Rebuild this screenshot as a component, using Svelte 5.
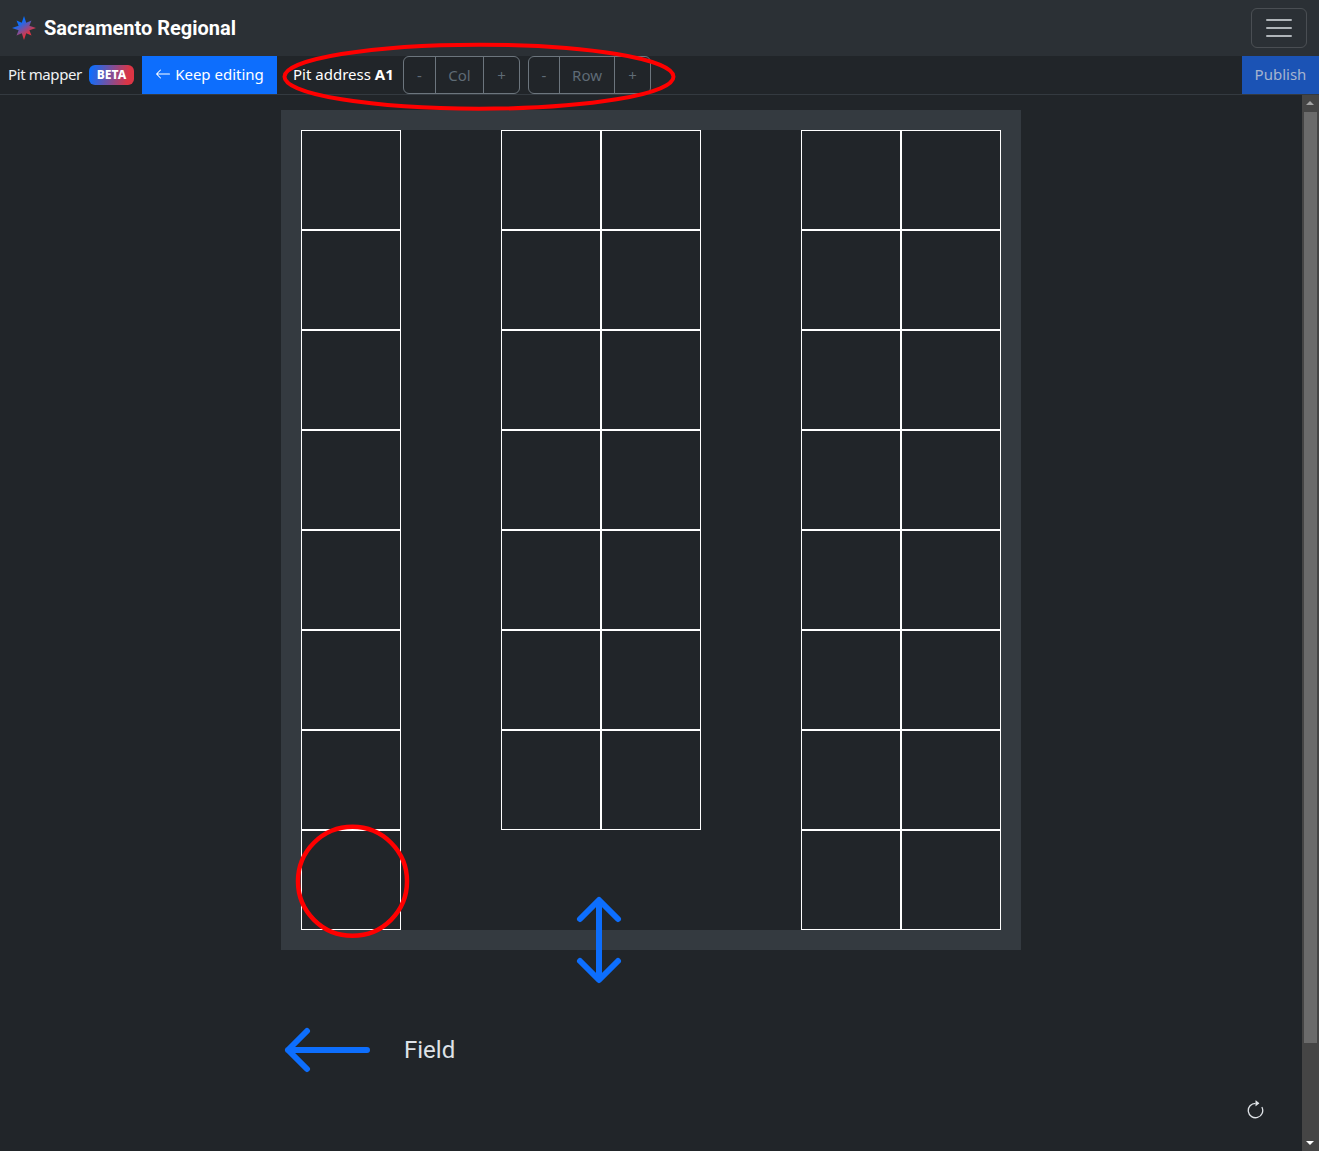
<script>
  const rows = [0, 1, 2, 3, 4, 5, 6, 7];
  // column 2 and 5 are the aisles, the centre block stops one row short
  const cols = [
    { col: 1, rows: 8 },
    { col: 3, rows: 7 },
    { col: 4, rows: 7 },
    { col: 6, rows: 8 },
    { col: 7, rows: 8 }
  ];
  const cells = cols.flatMap((c) => rows.slice(0, c.rows).map((r) => ({ col: c.col, row: r + 1 })));
</script>

<div class="page">
  <nav class="navbar">
    <div class="brand">
      <svg class="logo" width="26" height="26" viewBox="0 0 26 26">
        <defs>
          <linearGradient id="star" x1="0.25" y1="0.2" x2="0.7" y2="0.85">
            <stop offset="0.15" stop-color="#0d6efd" />
            <stop offset="0.85" stop-color="#dc3545" />
          </linearGradient>
        </defs>
        <polygon
          fill="url(#star)"
          points="13,1 15.220,7.640 20.500,5.500 18.360,10.780 25,13 18.360,15.220 20.500,20.500 15.220,18.360 13,25 10.780,18.360 5.500,20.500 7.640,15.220 1,13 7.640,10.780 5.500,5.500 10.780,7.640"
        />
      </svg>
      <span>Sacramento Regional</span>
    </div>
    <button class="toggler" aria-label="Toggle navigation">
      <svg width="30" height="30" viewBox="0 0 30 30">
        <path d="M3 7h24M3 15h24M3 23h24" stroke="rgba(222,226,230,.75)" stroke-width="2" stroke-linecap="round" />
      </svg>
    </button>
  </nav>

  <div class="subbar">
    <span class="title">Pit mapper</span>
    <span class="badge">BETA</span>
    <button class="keep">
      <svg width="16" height="16" viewBox="0 0 16 16" fill="currentColor">
        <path fill-rule="evenodd" d="M15 8a.5.5 0 0 0-.5-.5H2.707l3.147-3.146a.5.5 0 1 0-.708-.708l-4 4a.5.5 0 0 0 0 .708l4 4a.5.5 0 0 0 .708-.708L2.707 8.5H14.5A.5.5 0 0 0 15 8" />
      </svg>
      Keep editing
    </button>
    <span class="address">Pit address <b>A1</b></span>
    <div class="stepper col">
      <span class="minus">-</span><span class="name">Col</span><span class="plus">+</span>
    </div>
    <div class="stepper row">
      <span class="minus">-</span><span class="name">Row</span><span class="plus">+</span>
    </div>
    <button class="publish">Publish</button>
  </div>

  <div class="body">
    <main class="scroller">
      <div class="map">
        <div class="panel">
          <div class="grid">
            {#each cells as cell}
              <div class="cell" style="grid-column: {cell.col}; grid-row: {cell.row}"></div>
            {/each}
          </div>
          <svg class="updown" width="50" height="92" viewBox="0 0 50 92" fill="none" stroke="#0d6efd" stroke-width="6" stroke-linecap="round" stroke-linejoin="round">
            <path d="M25 6v78M6 24L25 5l19 19M6 66l19 19 19-19" />
          </svg>
        </div>
        <div class="field">
          <svg width="90" height="46" viewBox="0 0 90 46" fill="none" stroke="#0d6efd" stroke-width="6" stroke-linecap="round" stroke-linejoin="round">
            <path d="M7 23h79M26 4L7 23l19 19" />
          </svg>
          <span>Field</span>
        </div>
      </div>
    </main>
    <div class="scrollbar">
      <span class="arrow up"></span>
      <div class="track"><div class="thumb"></div></div>
      <span class="arrow down"></span>
    </div>
  </div>

  <svg class="refresh" width="21" height="21" viewBox="0 0 16 16" fill="#dee2e6">
    <path fill-rule="evenodd" d="M8 3a5 5 0 1 0 4.546 2.914.5.5 0 0 1 .908-.417A6 6 0 1 1 8 2z" />
    <path d="M8 4.466V.534a.25.25 0 0 1 .41-.192l2.360 1.966c.12.1.12.284 0 .384L8.410 4.658A.25.25 0 0 1 8 4.466" />
  </svg>

  <svg class="marks" width="1319" height="1151" fill="none" stroke="#f00">
    <ellipse cx="479" cy="76.700" rx="194.500" ry="32" stroke-width="4" />
    <circle cx="352.500" cy="881.300" r="54.500" stroke-width="4.500" />
  </svg>
</div>

<style>
  :global(body) {
    margin: 0;
    background: #212529;
    overflow: hidden;
  }

  .page {
    position: relative;
    display: flex;
    flex-direction: column;
    height: 100vh;
    font-family: "Noto Sans", "Liberation Sans", sans-serif;
    font-size: 15px;
    color: #dee2e6;
    overflow: hidden;
  }

  button {
    font: inherit;
    border: 0;
    cursor: pointer;
    padding: 0 0 2px;
  }

  .navbar {
    flex: none;
    height: 56px;
    display: flex;
    align-items: center;
    justify-content: space-between;
    padding: 0 12px;
    box-sizing: border-box;
    background: #2b3035;
  }

  .brand {
    display: flex;
    align-items: center;
    gap: 7px;
    font-family: Roboto, sans-serif;
    font-size: 20px;
    font-weight: 700;
    color: #fff;
  }

  .logo {
    margin-left: -1px;
  }

  .toggler {
    width: 56px;
    height: 40px;
    display: flex;
    align-items: center;
    justify-content: center;
    background: none;
    border: 1px solid rgba(255, 255, 255, 0.15);
    border-radius: 6px;
    padding: 0;
  }

  .subbar {
    flex: none;
    height: 39px;
    box-sizing: border-box;
    display: flex;
    align-items: stretch;
    background: #212529;
    border-bottom: 1px solid #343a40;
    line-height: 37px;
  }

  .title {
    margin-left: 8px;
    width: 74px;
    white-space: nowrap;
    letter-spacing: -0.4px;
    color: #f0f2f4;
  }

  .badge {
    align-self: center;
    margin-left: 7px;
    width: 45px;
    height: 20px;
    border-radius: 6px;
    background: linear-gradient(100deg, #0d6efd 5%, #dc3545 85%);
    color: #fff;
    font-size: 12px;
    font-weight: 800;
    line-height: 20px;
    text-align: center;
  }

  .keep {
    margin-left: 8px;
    width: 135px;
    display: flex;
    align-items: center;
    justify-content: center;
    gap: 4px;
    background: #0d6efd;
    color: #fff;
  }

  .address {
    margin-left: 16px;
    width: 102px;
    color: #fff;
    white-space: nowrap;
  }

  .stepper {
    display: flex;
    box-sizing: border-box;
    margin-left: 8px;
    height: 38px;
    border: 1px solid #6c757d;
    border-radius: 6px;
    color: #5f6b76;
    text-align: center;
  }

  .stepper span + span {
    border-left: 1px solid #6c757d;
  }

  .col .minus { width: 31px; }
  .col .name { width: 47px; }
  .col .plus { width: 35px; }
  .row .minus { width: 30px; }
  .row .name { width: 54px; }
  .row .plus { width: 35px; }

  .publish {
    margin-left: auto;
    width: 77px;
    background: #1b53b5;
    color: #a5b4cf;
  }

  .body {
    flex: 1;
    min-height: 0;
    display: flex;
  }

  .scroller {
    flex: 1;
    min-width: 0;
    overflow: hidden;
  }

  .scrollbar {
    flex: none;
    width: 17px;
    display: flex;
    flex-direction: column;
    background: #454545;
  }

  .arrow {
    flex: none;
    height: 17px;
    position: relative;
  }

  .arrow::before {
    content: "";
    position: absolute;
    left: 4px;
    border-left: 4px solid transparent;
    border-right: 4px solid transparent;
  }

  .up::before {
    top: 6px;
    border-bottom: 4px solid #a3a3a3;
  }

  .down::before {
    top: 7px;
    border-top: 4px solid #fff;
  }

  .track {
    flex: 1;
    padding: 0 2px;
  }

  .thumb {
    height: 931px;
    background: #6b6b6b;
  }

  .map {
    width: 740px;
    margin: 0 auto;
    padding-top: 15px;
  }

  .panel {
    position: relative;
    padding: 20px;
    background: #343a40;
  }

  .grid {
    display: grid;
    grid-template-columns: repeat(7, 100px);
    grid-template-rows: repeat(8, 100px);
    background: #212529;
  }

  .cell {
    box-sizing: border-box;
    border: 1px solid #fff;
  }

  .updown {
    position: absolute;
    left: 293px;
    top: 785px;
  }

  .field {
    display: flex;
    align-items: center;
    gap: 33px;
    margin-top: 77px;
    font-family: Roboto, sans-serif;
    font-size: 24px;
  }

  .refresh {
    position: absolute;
    left: 1245px;
    top: 1100px;
  }

  .marks {
    position: absolute;
    left: 0;
    top: 0;
    pointer-events: none;
  }
</style>
